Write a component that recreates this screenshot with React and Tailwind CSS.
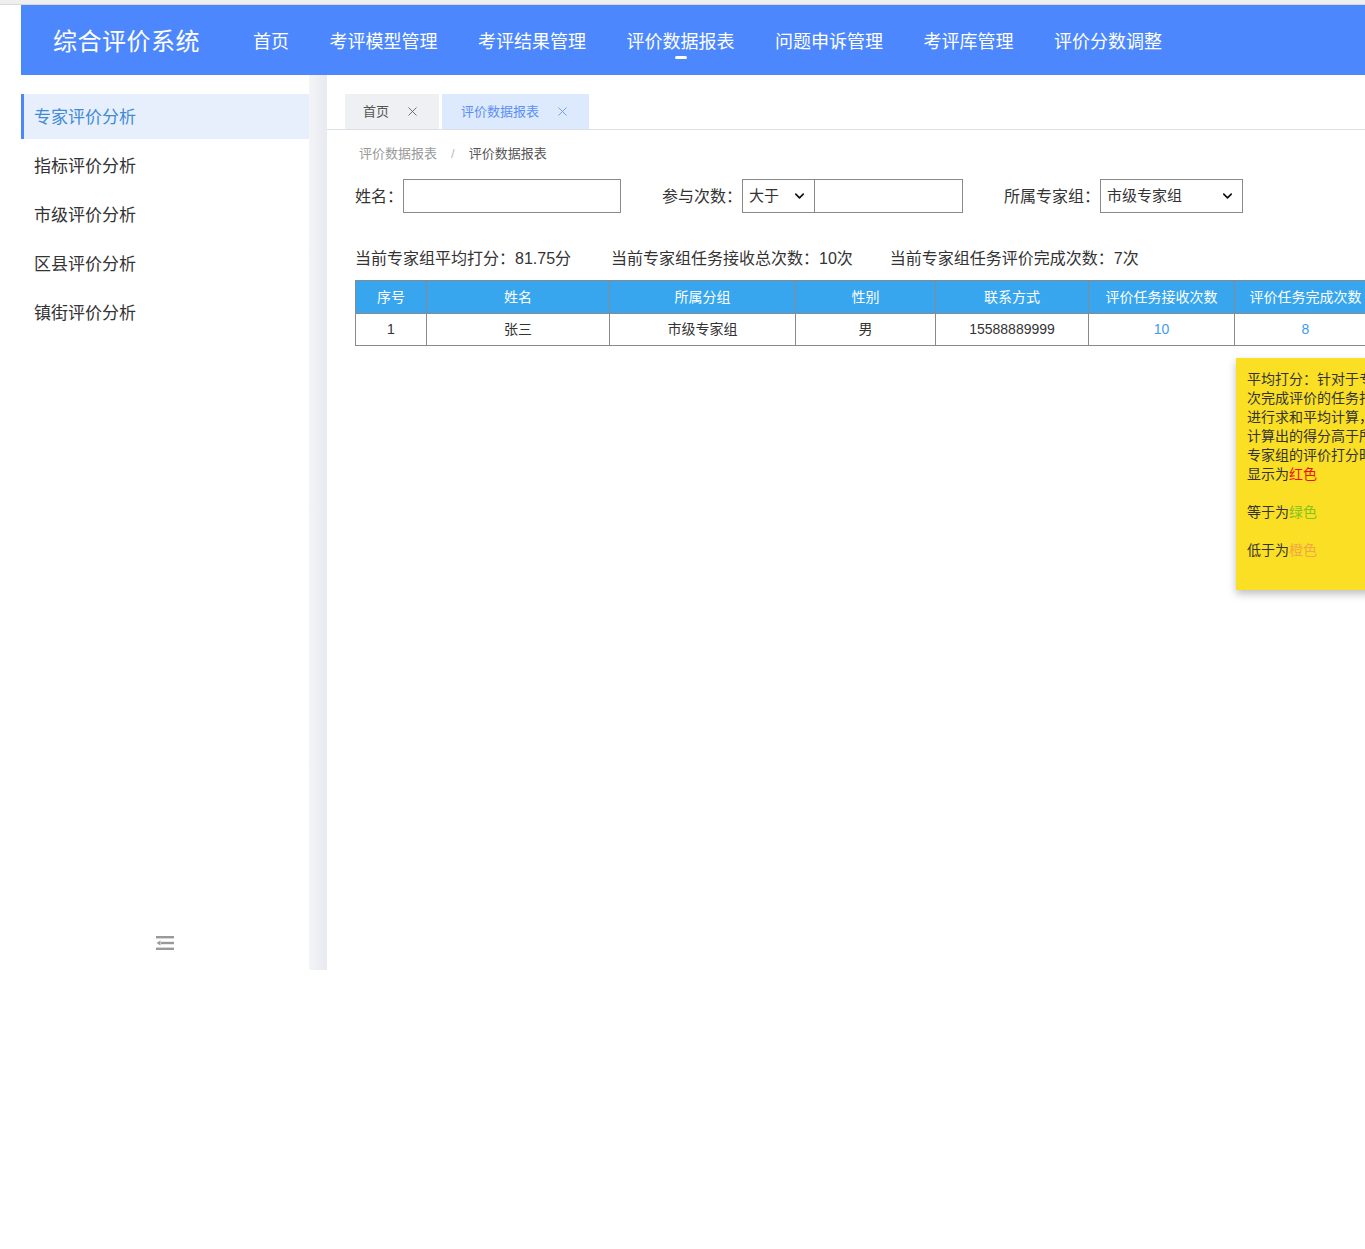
import { X, ChevronDown } from 'lucide-react'

const navItems = ['首页', '考评模型管理', '考评结果管理', '评价数据报表', '问题申诉管理', '考评库管理', '评价分数调整']

const sideItems = ['专家评价分析', '指标评价分析', '市级评价分析', '区县评价分析', '镇街评价分析']

const columns = [
  { label: '序号', w: 'w-[71px]' },
  { label: '姓名', w: 'w-[183px]' },
  { label: '所属分组', w: 'w-[186px]' },
  { label: '性别', w: 'w-[140px]' },
  { label: '联系方式', w: 'w-[153px]' },
  { label: '评价任务接收次数', w: 'w-[146px]' },
  { label: '评价任务完成次数', w: 'w-[142px]' },
]

function CollapseIcon() {
  return (
    <svg width="18" height="14" viewBox="0 0 18 14" fill="none">
      <rect x="0" y="0" width="18" height="2.4" fill="#999" />
      <rect x="5" y="5.8" width="13" height="2.4" fill="#999" />
      <path d="M0.5 7 L4.5 4.5 L4.5 9.5 Z" fill="#999" />
      <rect x="0" y="11.6" width="18" height="2.4" fill="#999" />
    </svg>
  )
}

function Select({ value, width }) {
  return (
    <div className={`relative ${width} h-[34px]`}>
      <select className="appearance-none w-full h-full border border-[#8a8a8a] bg-white text-[15px] pl-[6px] pr-6 outline-none">
        <option>{value}</option>
      </select>
      <ChevronDown
        size={15}
        strokeWidth={2.6}
        className="pointer-events-none absolute right-[8px] top-1/2 -translate-y-1/2 text-[#111]"
      />
    </div>
  )
}

export default function App() {
  return (
    <div className="w-[1365px] h-[1249px] bg-white text-[#333] font-['Liberation_Sans','Noto_Sans_CJK_SC',sans-serif] overflow-hidden">
      <div className="h-[5px] bg-[#efefef] border-b border-[#d9d9d9]" />

      <div className="ml-[21px] h-[965px] flex flex-col">
        {/* header */}
        <header className="h-[70px] shrink-0 bg-[#4d87fe] flex items-center pl-[32px] pt-[3px] text-white">
          <div className="text-[24px] leading-[32px] tracking-[0.5px]">综合评价系统</div>
          <nav className="ml-[53px] flex items-center gap-[40.5px]">
            {navItems.map((item) => (
              <div key={item} className="relative text-[18px] leading-[24px]">
                {item}
                {item === '评价数据报表' && (
                  <span className="absolute left-1/2 -translate-x-1/2 top-full mt-[2px] w-[12px] h-[3px] rounded-full bg-white" />
                )}
              </div>
            ))}
          </nav>
        </header>

        <div className="flex flex-1 min-h-0">
          {/* sidebar */}
          <aside className="w-[288px] shrink-0 flex flex-col pt-[19px]">
            {sideItems.map((item, i) => (
              <div
                key={item}
                className={
                  i === 0
                    ? 'h-[45px] mb-[4px] flex items-center pt-[3px] pl-[10px] border-l-[3px] border-[#4d87fe] bg-[#e7effd] text-[#3f8bd6] text-[17px]'
                    : 'h-[45px] mb-[4px] flex items-center pt-[3px] pl-[13px] text-[#333] text-[17px]'
                }
              >
                {item}
              </div>
            ))}
            <div className="mt-auto mb-[20px] flex justify-center">
              <CollapseIcon />
            </div>
          </aside>
          <div className="w-[18px] shrink-0 bg-gradient-to-r from-[#f3f4f7] to-[#e8eaf0]" />

          {/* main */}
          <main className="flex-1 relative overflow-hidden">
            <div className="pt-[19px] border-b border-[#dcdfe6]">
              <div className="flex gap-[3px] pl-[18px] h-[35px]">
                <div className="flex items-center pl-[18px] pr-[19px] bg-[#eff0f3] text-[13px] text-[#555]">
                  首页
                  <X size={15} strokeWidth={1.3} className="ml-[16px] text-[#555]" />
                </div>
                <div className="flex items-center pl-[19px] pr-[19px] bg-[#dde9fd] text-[13px] text-[#5b8ff6]">
                  评价数据报表
                  <X size={15} strokeWidth={1.3} className="ml-[16px] text-[#5b8ff6]" />
                </div>
              </div>
            </div>

            <div className="pl-[28px]">
              <div className="mt-[14px] pl-[4px] flex items-center text-[13px] leading-[20px]">
                <span className="text-[#999]">评价数据报表</span>
                <span className="mx-[14px] text-[#bbb]">/</span>
                <span className="text-[#555]">评价数据报表</span>
              </div>

              <div className="mt-[15px] flex items-center gap-[41px] text-[16px]">
                <div className="flex items-center">
                  <span className="pt-[2px]">姓名：</span>
                  <input className="w-[218px] h-[34px] border border-[#8a8a8a] outline-none px-2" />
                </div>
                <div className="flex items-center">
                  <span className="pt-[2px]">参与次数：</span>
                  <Select value="大于" width="w-[73px]" />
                  <input className="w-[148px] h-[34px] border border-[#8a8a8a] border-l-0 outline-none px-2" />
                </div>
                <div className="flex items-center">
                  <span className="pt-[2px]">所属专家组：</span>
                  <Select value="市级专家组" width="w-[143px]" />
                </div>
              </div>

              <div className="mt-[35px] flex items-center text-[16px] leading-[22px]">
                <span>当前专家组平均打分：81.75分</span>
                <span className="ml-[40px]">当前专家组任务接收总次数：10次</span>
                <span className="ml-[37px]">当前专家组任务评价完成次数：7次</span>
              </div>

              <table className="mt-[10px] w-[1021px] table-fixed border-collapse border border-[#8a8a8a] text-[14px] text-center">
                <thead>
                  <tr className="h-[33px] bg-[#37a6ef] text-white">
                    {columns.map((c) => (
                      <th key={c.label} className={`${c.w} font-normal border border-[#8a8a8a] whitespace-nowrap`}>
                        {c.label}
                      </th>
                    ))}
                  </tr>
                </thead>
                <tbody>
                  <tr className="h-[32px]">
                    <td className="border border-[#8a8a8a]">1</td>
                    <td className="border border-[#8a8a8a]">张三</td>
                    <td className="border border-[#8a8a8a]">市级专家组</td>
                    <td className="border border-[#8a8a8a]">男</td>
                    <td className="border border-[#8a8a8a]">15588889999</td>
                    <td className="border border-[#8a8a8a] text-[#3e9bf0]">10</td>
                    <td className="border border-[#8a8a8a] text-[#3e9bf0]">8</td>
                  </tr>
                </tbody>
              </table>
            </div>

            {/* tooltip */}
            <div className="absolute left-[909px] top-[283px] w-[190px] bg-[#fadf24] pl-[11px] pt-[12px] pb-[30px] text-[14px] leading-[19px] text-[#333] shadow-[0_4px_8px_rgba(0,0,0,0.25)] whitespace-nowrap">
              <div>平均打分：针对于专家每</div>
              <div>次完成评价的任务打分</div>
              <div>进行求和平均计算，</div>
              <div>计算出的得分高于所在</div>
              <div>专家组的评价打分时，</div>
              <div>
                显示为<span className="text-[#f01010]">红色</span>
              </div>
              <div className="mt-[19px]">
                等于为<span className="text-[#86c41a]">绿色</span>
              </div>
              <div className="mt-[19px]">
                低于为<span className="text-[#f4a544]">橙色</span>
              </div>
            </div>
          </main>
        </div>
      </div>
    </div>
  )
}
